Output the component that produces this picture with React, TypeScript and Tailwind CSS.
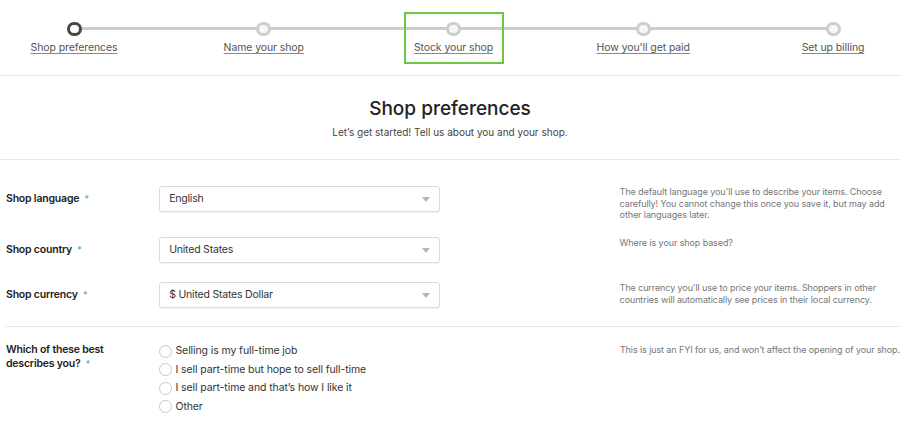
const steps = [
  { label: 'Shop preferences', active: true },
  { label: 'Name your shop' },
  { label: 'Stock your shop', highlighted: true },
  { label: "How you'll get paid" },
  { label: 'Set up billing' },
]

const selects = [
  {
    label: 'Shop language',
    value: 'English',
    help: "The default language you'll use to describe your items. Choose carefully! You cannot change this once you save it, but may add other languages later.",
    height: 'h-[51px]',
  },
  {
    label: 'Shop country',
    value: 'United States',
    help: 'Where is your shop based?',
    height: 'h-[45px]',
  },
  {
    label: 'Shop currency',
    value: '$ United States Dollar',
    help: "The currency you'll use to price your items. Shoppers in other countries will automatically see prices in their local currency.",
    height: 'h-[26px]',
  },
]

const options = [
  'Selling is my full-time job',
  'I sell part-time but hope to sell full-time',
  'I sell part-time and that’s how I like it',
  'Other',
]

function Required() {
  return <span className="ml-[5px] text-[9px] text-[#4fb8dc] align-top">*</span>
}

function Stepper() {
  return (
    <div className="relative w-[900px] h-[76px] border-b border-[#e8e8e8]">
      {/* track */}
      <div className="absolute top-[27px] left-[74px] w-[759px] h-[3px] bg-[#cdcdcd]" />
      <div className="relative flex justify-between pl-[14px] pr-[7px] pt-[22px]">
        {steps.map(step => (
          <div key={step.label} className="relative flex flex-col items-center w-[120px]">
            {step.highlighted && (
              <div className="absolute left-1/2 -translate-x-1/2 top-[-10px] w-[100px] h-[52px] border-2 border-[#6cc644]" />
            )}
            <div
              className={
                step.active
                  ? 'w-[15px] h-[14px] rounded-full border-[3px] border-[#454545] bg-white'
                  : 'w-[15px] h-[14px] rounded-full border-[3px] border-[#cdcdcd] bg-[#f7f7f7]'
              }
            />
            <span className="mt-[5px] text-[10.5px] leading-[14px] tracking-[-0.1px] text-[#555] underline underline-offset-2 decoration-[#888]">
              {step.label}
            </span>
          </div>
        ))}
      </div>
    </div>
  )
}

export default function App() {
  return (
    <div className="w-[918px] h-[421px] overflow-hidden bg-white font-['Inter',sans-serif] text-[#222]">
      <Stepper />

      {/* Title */}
      <div className="w-[900px] h-[84px] border-b border-[#e8e8e8] flex flex-col items-center pt-[20px]">
        <h1 className="text-[19px] leading-[26px] font-medium text-[#222]">Shop preferences</h1>
        <p className="mt-[3px] text-[10px] leading-[14px] text-[#444]">
          Let’s get started! Tell us about you and your shop.
        </p>
      </div>

      {/* Selects */}
      <div className="w-[900px] pt-[26px] pb-[18px]">
        {selects.map(row => (
          <div key={row.label} className={`flex items-start ${row.height}`}>
            <div className="w-[160px] pl-[6px] pt-[5px] text-[10.5px] leading-[16px] font-semibold tracking-[-0.2px] text-[#222]">
              {row.label}
              <Required />
            </div>
            <div className="relative w-[282px] h-[26px] flex items-center pl-[9px] border border-[#dadada] rounded-[3px] bg-white shadow-[0_1px_1px_rgba(0,0,0,0.05)] text-[10.5px] tracking-[-0.2px] text-[#333]">
              {row.value}
              <span className="absolute right-[9px] top-[10px] w-0 h-0 border-l-[4px] border-r-[4px] border-t-[5px] border-l-transparent border-r-transparent border-t-[#b5b5b5]" />
            </div>
            <p className="ml-[180px] w-[282px] text-[9px] leading-[11.5px] tracking-[-0.1px] text-[#777]">{row.help}</p>
          </div>
        ))}
      </div>

      {/* Radios */}
      <div className="ml-[5px] w-[895px] border-t border-[#e8e8e8] pt-[15px] flex items-start">
        <div className="w-[155px] pl-[1px] pt-[1px] text-[10.5px] leading-[14px] font-semibold tracking-[-0.2px] text-[#222]">
          Which of these best
          <br />
          describes you?
          <Required />
        </div>
        <div className="w-[462px] flex flex-col">
          {options.map(opt => (
            <label key={opt} className="flex items-center h-[18.5px] text-[10.5px] tracking-[-0.1px] text-[#333]">
              <span className="w-[13px] h-[13px] rounded-full border border-[#c8c8c8] bg-white" />
              <span className="ml-[3px]">{opt}</span>
            </label>
          ))}
        </div>
        <p className="pt-[2px] whitespace-nowrap text-[9px] leading-[11.5px] tracking-[-0.1px] text-[#777]">
          This is just an FYI for us, and won’t affect the opening of your shop.
        </p>
      </div>
    </div>
  )
}
